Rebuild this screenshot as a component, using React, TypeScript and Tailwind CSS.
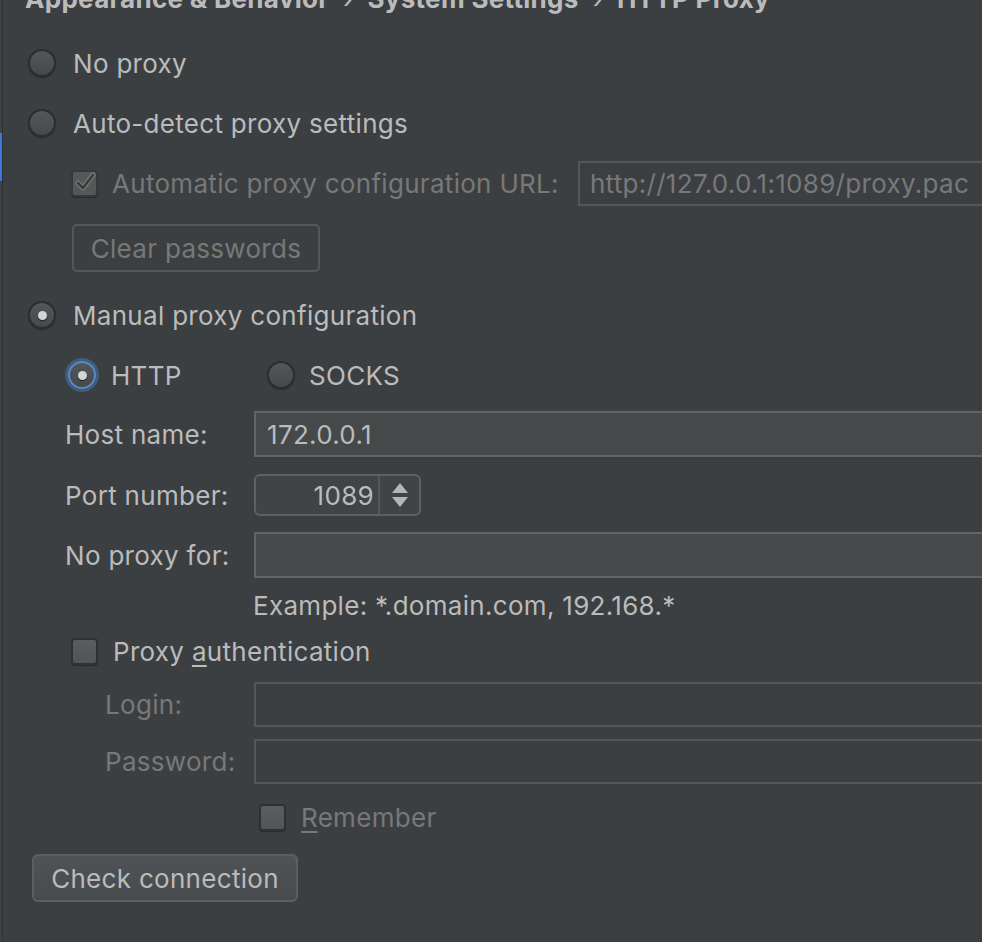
import React from "react";

const FONT = { fontFamily: "Inter, 'Noto Sans', 'Liberation Sans', sans-serif" };

function Radio({ selected, focus }: { selected?: boolean; focus?: boolean }) {
  return (
    <div
      className={
        "relative flex h-[28px] w-[28px] shrink-0 items-center justify-center rounded-full border-2 bg-gradient-to-b from-[#53575a] to-[#45494b] shadow-[0_1px_1px_rgba(0,0,0,0.35)] " +
        (focus ? "border-[#5b8ac0] ring-[3px] ring-[#3e5d80]" : "border-[#2b2d2e]")
      }
    >
      {selected && <div className="h-[9px] w-[9px] rounded-full bg-[#d5d5d5] shadow-[0_1px_1px_rgba(0,0,0,0.6)]" />}
    </div>
  );
}

function Checkbox({ checked, disabled }: { checked?: boolean; disabled?: boolean }) {
  return (
    <div
      className={
        "flex h-[27px] w-[27px] shrink-0 items-center justify-center rounded-[4px] border-2 shadow-[0_1px_1px_rgba(0,0,0,0.35)] " +
        (disabled ? "border-[#36393b] bg-[#555859]" : "border-[#2f3133] bg-gradient-to-b from-[#5a5d5f] to-[#525557]")
      }
    >
      {checked && (
        <svg width="22" height="22" viewBox="0 0 22 22">
          <path d="M4 11 L9 16 L19 3" fill="none" stroke="#7a7a7a" strokeWidth="5" strokeLinecap="round" strokeLinejoin="round" />
          <path d="M4 11 L9 16 L19 3" fill="none" stroke="#3a3c3e" strokeWidth="2.6" strokeLinecap="round" strokeLinejoin="round" />
        </svg>
      )}
    </div>
  );
}

export default function App() {
  return (
    <div className="flex h-[942px] w-[982px] overflow-hidden bg-[#3c3f41] text-[26px] tracking-[0.3px] text-[#bbbbbb]" style={FONT}>
      {/* left strip */}
      <div className="flex w-[3px] shrink-0">
        <div className="flex w-[2px] flex-col bg-[#3e4143]">
          <div className="h-[133px]" />
          <div className="h-[48px] bg-[#3c79d8]" />
        </div>
        <div className="w-[1px] bg-[#2f3133]" />
      </div>

      <div className="flex w-[1000px] shrink-0 flex-col">
        {/* breadcrumb */}
        <div className="ml-[22px] mt-[-14px] flex h-[26px] items-center whitespace-nowrap font-bold leading-[26px] text-[#bbbbbb]">
          Appearance &amp; Behavior<span className="mx-[14px] font-normal">›</span>System Settings
          <span className="mx-[14px] font-normal">›</span>HTTP Proxy
        </div>

        {/* No proxy */}
        <div className="ml-[25px] mt-[21px] flex h-[60px] items-center gap-[17px]">
          <Radio />
          <span>No proxy</span>
        </div>

        {/* Auto-detect */}
        <div className="ml-[25px] flex h-[60px] items-center gap-[17px]">
          <Radio />
          <span>Auto-detect proxy settings</span>
        </div>

        {/* Automatic proxy config URL */}
        <div className="ml-[68px] flex h-[60px] items-center">
          <Checkbox checked disabled />
          <span className="ml-[14px] whitespace-nowrap text-[#787878]">Automatic proxy configuration URL:</span>
          <div className="ml-[19px] flex h-[45px] flex-1 items-center border-2 border-[#545657] pl-[10px] text-[#787878]">
            http://127.0.0.1:1089/proxy.pac
          </div>
        </div>

        {/* Clear passwords */}
        <div className="ml-[69px] mt-[11px] flex h-[48px] w-[248px] items-center justify-center rounded-[5px] border-2 border-[#55585a] text-[#787878]">
          Clear passwords
        </div>

        {/* Manual proxy */}
        <div className="ml-[25px] mt-[13px] flex h-[60px] items-center gap-[17px]">
          <Radio selected />
          <span>Manual proxy configuration</span>
        </div>

        {/* HTTP / SOCKS */}
        <div className="ml-[65px] flex h-[60px] items-center">
          <div className="flex w-[199px] items-center gap-[15px]">
            <Radio selected focus />
            <span>HTTP</span>
          </div>
          <div className="flex items-center gap-[14px]">
            <Radio />
            <span>SOCKS</span>
          </div>
        </div>

        {/* Host name */}
        <div className="ml-[62px] mt-[6px] flex h-[46px] items-center">
          <span className="w-[189px] shrink-0">Host name:</span>
          <div className="flex h-[46px] flex-1 items-center border-2 border-[#646464] bg-[#45494a] pl-[11px] text-[#bbbbbb]">
            172.0.0.1
          </div>
        </div>

        {/* Port number */}
        <div className="ml-[62px] mt-[15px] flex h-[46px] items-center">
          <span className="w-[189px] shrink-0">Port number:</span>
          <div className="flex h-[42px] w-[167px] items-stretch rounded-[6px] border-2 border-[#5e6162] bg-[#414446]">
            <div className="flex w-[122px] items-center justify-end pr-[4px]">1089</div>
            <div className="w-[2px] bg-[#55585a]" />
            <div className="flex flex-1 flex-col items-center justify-center gap-[4px]">
              <svg width="16" height="10" viewBox="0 0 16 10">
                <path d="M8 0 L16 10 L0 10 Z" fill="#b5b5b5" />
              </svg>
              <svg width="16" height="10" viewBox="0 0 16 10">
                <path d="M0 0 L16 0 L8 10 Z" fill="#b5b5b5" />
              </svg>
            </div>
          </div>
        </div>

        {/* No proxy for */}
        <div className="ml-[62px] mt-[14px] flex h-[46px] items-center">
          <span className="w-[189px] shrink-0">No proxy for:</span>
          <div className="h-[46px] flex-1 border-2 border-[#646464] bg-[#45494a]" />
        </div>

        {/* Example */}
        <div className="ml-[250px] mt-[12px] flex h-[30px] items-center whitespace-nowrap">
          Example: *.domain.com, 192.168.*
        </div>

        {/* Proxy authentication */}
        <div className="ml-[68px] mt-[11px] flex h-[40px] items-center">
          <Checkbox />
          <span className="ml-[15px]">
            Proxy <u className="underline-offset-[4px]">a</u>uthentication
          </span>
        </div>

        {/* Login */}
        <div className="ml-[102px] mt-[11px] flex h-[45px] items-center text-[#787878]">
          <span className="w-[149px] shrink-0">Login:</span>
          <div className="h-[45px] flex-1 border-2 border-[#545657]" />
        </div>

        {/* Password */}
        <div className="ml-[102px] mt-[12px] flex h-[45px] items-center text-[#787878]">
          <span className="w-[149px] shrink-0">Password:</span>
          <div className="h-[45px] flex-1 border-2 border-[#545657]" />
        </div>

        {/* Remember */}
        <div className="ml-[256px] mt-[13px] flex h-[40px] items-center">
          <Checkbox />
          <span className="ml-[15px] text-[#787878]">
            <u className="underline-offset-[4px]">R</u>emember
          </span>
        </div>

        {/* Check connection */}
        <div className="ml-[29px] mt-[17px] flex h-[48px] w-[266px] items-center justify-center rounded-[6px] border-2 border-[#5b5f61] bg-gradient-to-b from-[#4f5355] to-[#474b4d] text-[#bbbbbb]">
          Check connection
        </div>
      </div>
    </div>
  );
}
